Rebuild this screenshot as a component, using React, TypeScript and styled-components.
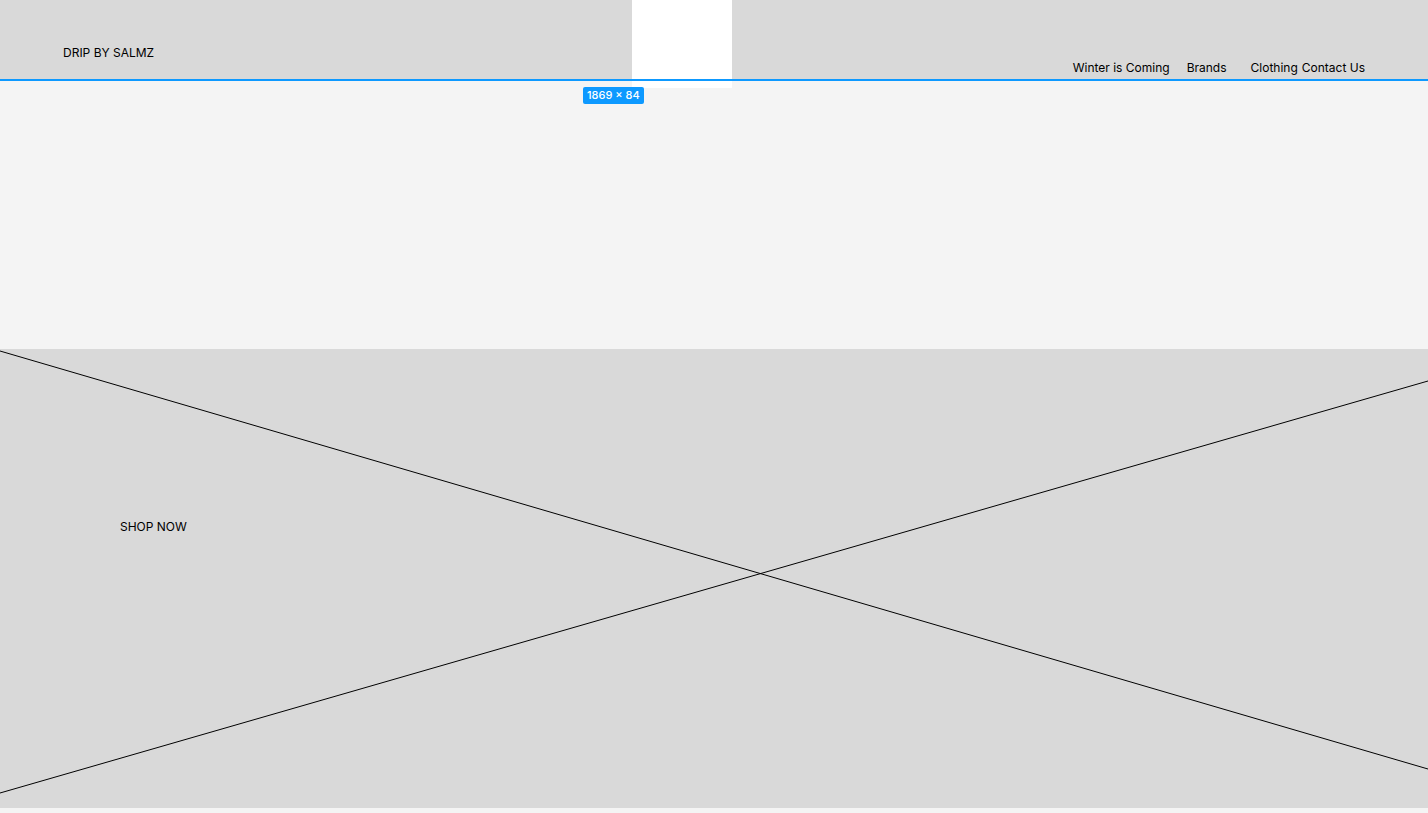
import React from 'react'
import styled, { createGlobalStyle } from 'styled-components'

const Global = createGlobalStyle`
  html, body {
    margin: 0;
    padding: 0;
    background: #f4f4f4;
    font-family: Inter, 'Noto Sans', sans-serif;
    color: #000;
    overflow: hidden;
  }
`

const Page = styled.div`
  position: relative;
  width: 1428px;
  height: 813px;
  display: flex;
  flex-direction: column;
`

const Header = styled.header`
  height: 79px;
  background: #d9d9d9;
  border-bottom: 2px solid #0d99ff;
  display: flex;
  justify-content: space-between;
  padding: 0 63px;
  box-sizing: content-box;
`

const Logo = styled.div`
  font-size: 12px;
  padding-top: 45px;
  line-height: 15px;
`

const Nav = styled.nav`
  display: flex;
  align-items: flex-start;
  padding-top: 60px;
`

const NavItem = styled.span<{ $gap?: number }>`
  font-size: 12px;
  line-height: 15px;
  margin-left: ${p => p.$gap ?? 0}px;
`

const Blank = styled.section`
  height: 268px;
  background: #f4f4f4;
`

const Hero = styled.section`
  position: relative;
  height: 459px;
  background: #d9d9d9;
  display: flex;
  align-items: flex-start;
  padding: 170px 0 0 120px;
  box-sizing: border-box;
`

const HeroLines = styled.svg`
  position: absolute;
  inset: 0;
  width: 100%;
  height: 100%;
`

const ShopNow = styled.span`
  position: relative;
  font-size: 12px;
  line-height: 15px;
`

const Selection = styled.div`
  position: absolute;
  left: 632px;
  top: 0;
  width: 100px;
  height: 88px;
  background: #fff;
`

const SelectionLine = styled.div`
  position: absolute;
  left: 0;
  right: 0;
  top: 79px;
  height: 2px;
  background: #0d99ff;
`

const SizeBadge = styled.div`
  position: absolute;
  left: 583px;
  top: 87px;
  height: 17px;
  padding: 0 4px;
  border-radius: 2px;
  background: #0d99ff;
  color: #fff;
  font-size: 11px;
  font-weight: 500;
  line-height: 17px;
`

export default function App() {
  return (
    <>
      <Global />
      <Page>
        <Header>
          <Logo>DRIP BY SALMZ</Logo>
          <Nav>
            <NavItem>Winter is Coming</NavItem>
            <NavItem $gap={17}>Brands</NavItem>
            <NavItem $gap={24}>Clothing</NavItem>
            <NavItem $gap={4}>Contact Us</NavItem>
          </Nav>
        </Header>
        <Blank />
        <Hero>
          <HeroLines viewBox="0 0 1428 459" preserveAspectRatio="none">
            <line x1="0" y1="2" x2="1428" y2="420" stroke="#000" strokeWidth="1" />
            <line x1="0" y1="444" x2="1428" y2="32" stroke="#000" strokeWidth="1" />
          </HeroLines>
          <ShopNow>SHOP NOW</ShopNow>
        </Hero>
        <Selection />
        <SelectionLine />
        <SizeBadge>1869 × 84</SizeBadge>
      </Page>
    </>
  )
}
